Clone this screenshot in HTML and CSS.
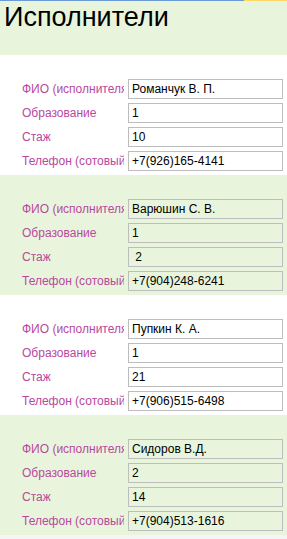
FILE: index.html
```html
<!DOCTYPE html>
<html lang="ru">
<head>
  <meta charset="UTF-8">
  <meta name="viewport" content="width=device-width, initial-scale=1.0">
  <title>Исполнители</title>
  <link rel="stylesheet" href="styles.css">
</head>
<body>
  <!-- Top stripe -->
  <div class="top-line"><span class="blue"></span><span class="yellow"></span></div>

  <!-- Header -->
  <div class="header">
    <h1>Исполнители</h1>
  </div>

  <!-- Performers list -->
  <div class="item">
    <div class="row"><label title="ФИО (исполнителя)">ФИО (исполнителя)</label><input type="text" value="Романчук В. П."></div>
    <div class="row"><label>Образование</label><input type="text" value="1"></div>
    <div class="row"><label>Стаж</label><input type="text" value="10"></div>
    <div class="row"><label title="Телефон (сотовый)">Телефон (сотовый)</label><input type="text" value="+7(926)165-4141"></div>
  </div>

  <div class="item alt">
    <div class="row"><label title="ФИО (исполнителя)">ФИО (исполнителя)</label><input type="text" value="Варюшин С. В."></div>
    <div class="row"><label>Образование</label><input type="text" value="1"></div>
    <div class="row"><label>Стаж</label><input type="text" value=" 2"></div>
    <div class="row"><label title="Телефон (сотовый)">Телефон (сотовый)</label><input type="text" value="+7(904)248-6241"></div>
  </div>

  <div class="item">
    <div class="row"><label title="ФИО (исполнителя)">ФИО (исполнителя)</label><input type="text" value="Пупкин К. А."></div>
    <div class="row"><label>Образование</label><input type="text" value="1"></div>
    <div class="row"><label>Стаж</label><input type="text" value="21"></div>
    <div class="row"><label title="Телефон (сотовый)">Телефон (сотовый)</label><input type="text" value="+7(906)515-6498"></div>
  </div>

  <div class="item alt">
    <div class="row"><label title="ФИО (исполнителя)">ФИО (исполнителя)</label><input type="text" value="Сидоров В.Д."></div>
    <div class="row"><label>Образование</label><input type="text" value="2"></div>
    <div class="row"><label>Стаж</label><input type="text" value="14"></div>
    <div class="row"><label title="Телефон (сотовый)">Телефон (сотовый)</label><input type="text" value="+7(904)513-1616"></div>
  </div>
</body>
</html>
```

FILE: styles.css
```css
/* Global */
body {
  margin: 0;
  font-family: 'Liberation Sans', Arial, sans-serif;
  background: #f5f5f5;
  color: #000;
}

/* Top stripe */
.top-line {
  display: flex;
  height: 1px;
}
.top-line .blue {
  width: 244px;
  background: #6a9bd6;
}
.top-line .yellow {
  flex: 1;
  background: #ffd966;
}

/* Header */
.header {
  background: #e8f5dc;
  height: 54px;
}
.header h1 {
  margin: 0;
  padding: 1px 0 0 4px;
  font-size: 27px;
  font-weight: normal;
  line-height: 30px;
}

/* Items */
.item {
  background: #fff;
  height: 120px;
  box-sizing: border-box;
  padding: 24px 4px 0 22px;
  display: flex;
  flex-direction: column;
  gap: 4px;
}
.item.alt {
  background: #e8f5dc;
}
.row {
  display: flex;
  align-items: center;
  height: 20px;
}
.row label {
  width: 102px;
  margin-right: 4px;
  flex: none;
  white-space: nowrap;
  overflow: hidden;
  font-size: 12px;
  color: #b9489f;
}
.row input {
  width: 155px;
  height: 20px;
  box-sizing: border-box;
  margin: 0;
  padding: 0 3px;
  border: 1px solid #bdbdbd;
  background: transparent;
  font-family: 'Liberation Sans', Arial, sans-serif;
  font-size: 12px;
  color: #000;
}
```
